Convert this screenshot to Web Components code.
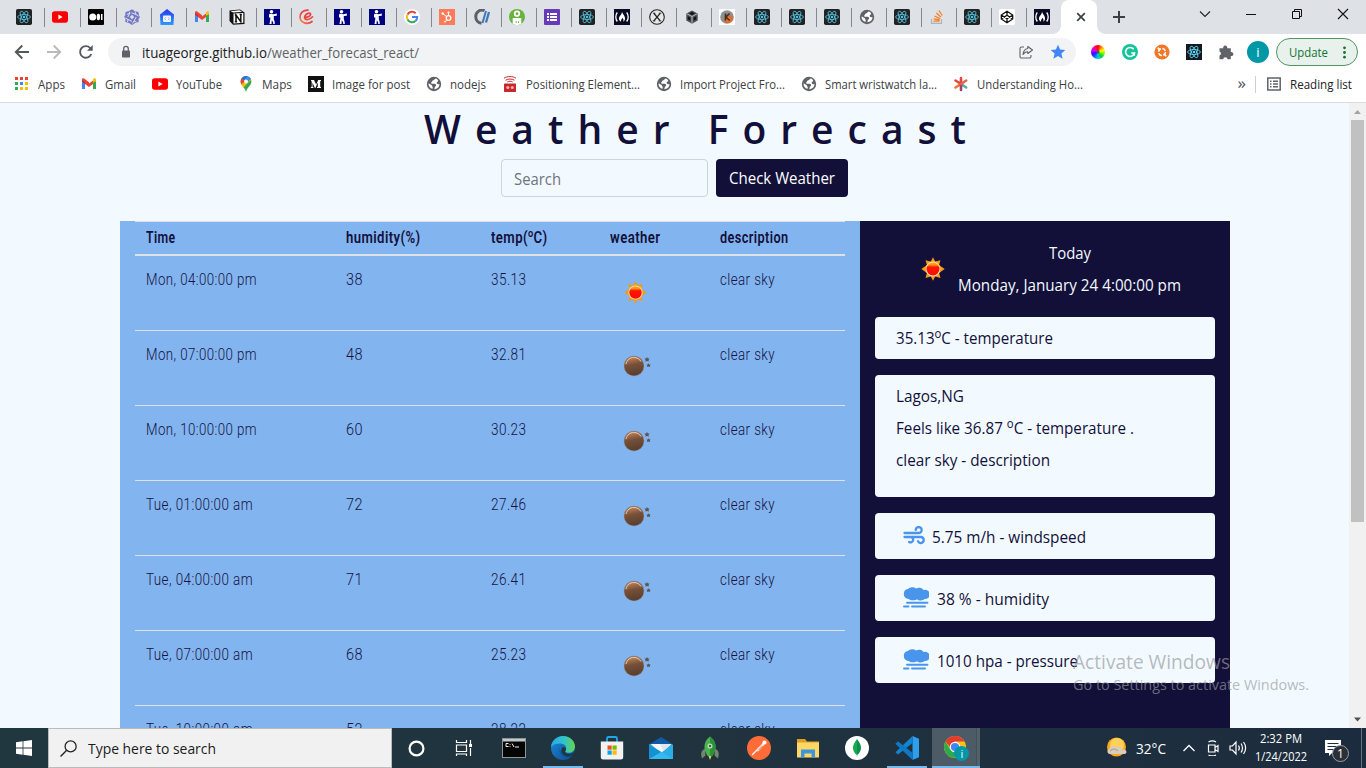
<!DOCTYPE html>
<html lang="en">
<head>
<meta charset="utf-8">
<title>Weather Forecast</title>
<style>
html,body{margin:0;height:100%;overflow:hidden}
body{font-family:"Open Sans","Noto Sans",sans-serif;font-size:12px;color:#3c4043}
</style>
</head>
<body>
<desktop-screen></desktop-screen>
<script>
const stroke = (d, w = 1.5, c = 'currentColor', more = '') => `<path d="${d}" fill="none" stroke="${c}" stroke-width="${w}" ${more}/>`;
const orbits = c => [0, 60, 120].map(a => `<ellipse cx="8" cy="8" rx="6.4" ry="2.5" fill="none" stroke="${c}" stroke-width=".85" transform="rotate(${a} 8 8)"/>`).join('') + `<circle cx="8" cy="8" r="1.3" fill="${c}"/>`;
const gmail = '<path d="M1 13V4l3 2.3V13z" fill="#4285f4"/><path d="M15 13V4l-3 2.3V13z" fill="#34a853"/><path d="M1 5.2V3.6C1 2.3 2.4 2 3.2 2.6L8 6.3v3.8z" fill="#ea4335"/><path d="M4 4.5 8 7.6l4-3.1v3.4L8 11 4 7.9z" fill="#ea4335"/><path d="M12 6.8V3.3l1-.8c.9-.6 2 0 2 1.1v1.6z" fill="#fbbc04"/><path d="M1 4l3 2.4v1.4L1 5.5z" fill="#c5221f"/>';
const youtube = '<rect x="0" y="2.3" width="16" height="11.4" rx="2.6" fill="#f00"/><path d="M6.4 5.5v5L10.6 8z" fill="#fff"/>';
const globe = '<circle cx="8" cy="8" r="7.2" fill="#5f6368"/><path d="M9.8 2.600C8.200 3 8.600 4.200 7 4.600c-1.200.3-.7 1.300-1.500 1.700-1 .6-.2 1.700 1 1.500 1.900-.3 3.400 0 3.600 1.500.1 1-1.200 1.200-1.400 2.200-.1.700-.2 1.200-.6 1.700 3.200 0 5.400-2.300 5.400-5.200-1.600.5-3-.1-2.800-1.300.2-1.200 1.300-1 1.500-2C11.700 3.500 10.700 2.900 9.800 2.600z" fill="#fff"/><path d="M2.500 7.500c1.300.1 1.500 1.100 2.600 1.300 1.200.3.800 1.600 1.500 2.100.4.400.1 1.300-.1 1.900C4 12.300 2.500 10.500 2.500 7.500z" fill="#fff"/>';
const cloud = '<path d="M5.500 12a5 5 0 0 1-.6-9.900 6 6 0 0 1 8.200-.5 5.500 5.500 0 0 1 7.500 1.500A4.600 4.600 0 1 1 21.500 12c-1.400 1.800-5.800 2-7.500.2-1.600 1.500-6.500 1.600-8.500-.2z" fill="#4995eb"/>' + stroke('M4 15.700h20.500M1 19.500h4.500M9 19.500h13', 1.900, '#4995eb', 'stroke-linecap="round"');
const I = {
 react: ['0 0 16 16', '<rect width="16" height="16" rx="1.800" fill="#222"/>' + orbits('#53c1de')],
 reactsq: ['0 0 16 16', '<rect width="16" height="16" fill="#15181d"/>' + orbits('#61dafb')],
 youtube: ['0 0 16 16', youtube],
 medium: ['0 0 16 16', '<rect width="16" height="16" rx="1" fill="#000"/><circle cx="4.700" cy="8" r="3.500" fill="#fff"/><ellipse cx="10.400" cy="8" rx="1.700" ry="3.300" fill="#fff"/><path d="M13 5h1.500v6H13z" fill="#fff"/>'],
 swirl: ['0 0 16 16', '<path d="M8 .3 11 2.200 14.500 3l.5 3.700L16 8l-1.500 2 .2 3L11 14l-3 2-3-2-3.700-1L1.500 9.700.2 8 1.300 6 1.500 3 5 2z" fill="#7478c4"/>' + stroke('M7.500 3.800 12 5.500M12.200 8 10 12M8 12.300 4 10.500M3.800 8 6 4M5 2.800 6 4 3 5.500M11 2.500 12 5.500 14.500 7M12.500 13 10 12 8.500 14.500M3.500 13 4 10.500 1.500 9', 1, '#dee1e6') + '<path d="M8 5.700l2.200 2.300L8 10.300 5.800 8z" fill="#dee1e6"/>'],
 house: ['0 0 16 16', '<defs><linearGradient id="h" x2="0" y2="1"><stop stop-color="#2439e8"/><stop offset="1" stop-color="#2f9bff"/></linearGradient></defs><path d="M8 0 15 5.500 14.500 16h-13L1 5.500z" fill="url(#h)"/><rect x="4" y="6.500" width="8" height="6.500" rx="1" fill="#eef3ff"/>' + stroke('M6.800 8.300 5.600 9.700l1.200 1.400M9.200 8.300l1.200 1.400-1.200 1.400', .8, '#7fa3f5')],
 gmail: ['0 0 16 16', gmail],
 notion: ['0 0 16 16', '<path d="M.5 1.500 11 .5 15.500 3.500V15L4 15.800.5 12z" fill="#111"/><path d="M1.500 2.200 10.700 1.300l2.300 1.500-8.800.6z" fill="#fff"/><path d="M4.500 4.600l9.800-.7v9.900l-9.800.7z" fill="#fff"/>' + stroke('M7 13V6l4.800 6.700V5.500M5.800 6h2M5.800 12.700h2.300M10.600 5.600h2.300', 1.500, '#111')],
 runner: ['0 0 16 16', '<rect width="16" height="16" fill="#010080"/><circle cx="7.500" cy="2.800" r="1.800" fill="#fff"/><path d="M5.500 4.700 9.800 5.300 12.800 4.500v2.300L9.800 7v3.200l.8 2.200.2 2.600H9.300L9 13 7.800 11.300 7.500 15H5.500L6.300 10V8.500H5V6z" fill="#fff"/>'],
 eloop: ['0 0 16 16', '<defs><linearGradient id="e" x1="1" x2="0" y2="1"><stop stop-color="#f0413d"/><stop offset=".6" stop-color="#e64545"/><stop offset="1" stop-color="#f89b3a"/></linearGradient></defs>' + stroke('M5.500 8.300C8.500 8.500 12 7 11.500 5 10.800 3.600 7.500 4 6 7c-1.200 2.500.5 4 3 3.500 2-.3 3.500-1.500 4.500-2.700M9 1.200C4 1 .9 4.300 1 8.300c.3 5.500 7.500 8 12 4.200', 1.700, 'url(#e)', 'stroke-linecap="round"')],
 google: ['0 0 16 16', '<circle cx="8" cy="8" r="8" fill="#fff"/>' + stroke('M3.500 5.400A5.200 5.200 0 0 1 11.700 4.300', 2, '#ea4335') + stroke('M3.500 10.600a5.200 5.200 0 0 1 0-5.200', 2, '#fbbc05') + stroke('M11.500 11.900A5.200 5.200 0 0 1 3.500 10.600', 2, '#34a853') + stroke('M8 8h5.200c0 1.600-.6 3-1.700 3.900', 2, '#4285f4')],
 hubspot: ['0 0 16 16', '<rect width="16" height="16" fill="#ff7a59"/><circle cx="9.500" cy="9" r="2.300" fill="none" stroke="#fff" stroke-width="1.300"/>' + stroke('M9.500 6.500V4M7.500 7.500 3.700 4.500M7.800 11l-1.500 1.500', 1, '#fff') + '<circle cx="9.500" cy="3.500" r="1.100" fill="#fff"/><circle cx="3.700" cy="4.500" r="1.200" fill="#fff"/><circle cx="6" cy="12.600" r=".9" fill="#fff"/>'],
 cslash: ['0 0 16 16', stroke('M10.500 1.600A6.300 6.300 0 0 0 1.800 8 6.300 6.300 0 0 0 7.500 14.200', 3, '#5b616a') + stroke('M12 2 8.500 14', 2, '#4277b8') + stroke('M15 3 12 13.500', 2.300, '#4277b8')],
 person: ['0 0 16 16', '<circle cx="8" cy="8" r="8" fill="#69b23e"/><circle cx="8" cy="4.700" r="2.300" fill="none" stroke="#fff" stroke-width="1.700"/><path d="M3.700 9h8.600v5.700a8 8 0 0 1-8.600 0z" fill="#fff"/><path d="M6.700 12.300h1V14h-1zm2.300 0h1V14H9z" fill="#69b23e"/>'],
 forms: ['0 0 16 16', '<rect width="16" height="16" rx="1" fill="#673ab7"/><path d="M3 4h2v2H3zm3 0h7v2H6zM3 7h2v2H3zm3 0h7v2H6zM3 10h2v2H3zm3 0h7v2H6z" fill="#fff"/>'],
 fcc: ['0 0 16 16', '<rect width="16" height="16" fill="#0a0a23"/>' + stroke('M3.300 3.500c-2 2.500-2 6.500 0 9M12.700 3.500c2 2.500 2 6.500 0 9', 1.300, '#fff') + '<path d="M8 2.500c.3 2.500 3.500 4.500 3 7.500-.2 1.300-1 2.300-2 2.700.8-1.200.7-2.800-.7-3.900-.2 1.500-1.800 1.900-1.200 3.900C4 11 4.700 8 6.300 6.400 7.500 5 8 4 8 2.500z" fill="#fff"/>'],
 xcircle: ['0 0 16 16', '<circle cx="8" cy="8" r="7.300" fill="#e6e7e9" stroke="#222" stroke-width="1.100"/>' + stroke('M5 4.500l6 7.200M11.200 4.300 4.800 11.800', 1.300, '#222') + stroke('M3.800 4.200h2.500M9.800 4.200h2.500M3.800 11.900h2.500M9.800 11.900h2.500', .9, '#222')],
 cube: ['0 0 16 16', '<path d="M8 1.500 13.700 4.500v7L8 14.700 2.300 11.500v-7z" fill="#4b4f54"/>' + stroke('M2.700 4.700 8 7.500l5.300-2.800M8 7.500v7', .9, '#c3c6ca') + '<path d="M8 3 10.700 4.500 8 6 5.300 4.500zM3.800 7.300 6.300 8.800v3L3.800 10.300zM12.200 7.300 9.700 8.800v3l2.500-1.500z" fill="#111"/>'],
 kball: ['0 0 16 16', '<defs><radialGradient id="k" cx=".6" cy=".65"><stop stop-color="#ff8b32"/><stop offset=".45" stop-color="#de692a"/><stop offset=".85" stop-color="#8c9296"/></radialGradient></defs><rect width="16" height="16" fill="#fff"/><circle cx="8" cy="8" r="6.800" fill="url(#k)"/>' + stroke('M6.500 4.500v7M10.500 4.500 7 8l3.700 3.500', 1.600, '#37302c')],
 stack: ['0 0 16 16', stroke('M2.500 10v4.300h10V10', 1.200, '#b0b4b9') + stroke('M4.500 12.200h6M4.700 9.800l6 1.200M5.500 7l5.600 2.600M7.300 4l4.600 4M9.800 1.500l3.500 5', 1.300, '#f48024')],
 codepen: ['0 0 16 16', '<rect width="16" height="16" rx="1.500" fill="#fff"/>' + stroke('M8 2.300 13.700 6v4L8 13.700 2.300 10V6zM2.300 6 8 9.800 13.700 6M2.300 10 8 6.200l5.700 3.800M8 2.300v3.900M8 9.800v3.900', 1.300, '#111')],
 globe: ['0 0 16 16', globe],
 close: ['0 0 16 16', stroke('M4.200 4.200l7.600 7.600M11.800 4.200l-7.600 7.600', 1.700, '#3c4043')],
 plus: ['0 0 16 16', stroke('M8 2v12M2 8h12', 2, '#3c4043')],
 chev: ['0 0 16 16', stroke('M3 5.500l5 5 5-5', 1.100, '#222')],
 min: ['0 0 16 16', stroke('M3 8.500h10', 1, '#111')],
 max: ['0 0 16 16', stroke('M3.500 5.500h7v7h-7zM5.500 5.500v-2h7v7h-2', 1, '#111')],
 winx: ['0 0 16 16', stroke('M3 3l10 10M13 3 3 13', 1.100, '#111')],
 back: ['0 0 16 16', stroke('M15 8H2M8.300 1.500 1.800 8l6.500 6.500', 1.900, '#54585c')],
 fwd: ['0 0 16 16', stroke('M1 8h13M7.700 1.500 14.200 8l-6.500 6.500', 1.900, '#b8bbbe')],
 reload: ['0 0 16 16', stroke('M13.300 10A5.800 5.800 0 1 1 12 3.800l1 1', 1.900, '#54585c') + '<path d="M14.700 1v5.700H9z" fill="#54585c"/>'],
 lock: ['0 0 16 16', '<rect x="4" y="6.500" width="8" height="7" rx=".8" fill="#5f6368"/>' + stroke('M5.700 7V4.700a2.300 2.300 0 0 1 4.600 0V7', 1.300, '#5f6368')],
 share: ['0 0 16 16', stroke('M6 3H3.500A1.500 1.500 0 0 0 2 4.500v8A1.500 1.500 0 0 0 3.500 14h8a1.500 1.500 0 0 0 1.500-1.500V11M9.800 2.500 14.500 6 9.800 9.500V7.700C7.500 7.700 6 8.800 5 10.500 5.300 7.500 7 5 9.800 4.500z', 1.100, '#5f6368', 'stroke-linejoin="round"')],
 star: ['0 0 16 16', '<path d="M8 .8l2.100 4.800 5.200.5-3.900 3.500 1.200 5.100L8 12l-4.600 2.700 1.200-5.100L.7 6.100l5.200-.5z" fill="#4285f4"/>'],
 grammarly: ['0 0 16 16', '<circle cx="8" cy="8" r="8" fill="#15c39a"/>' + stroke('M11.700 5.200A4.500 4.500 0 1 0 12.500 9H9.300M12.300 9.200v2.600', 1.600, '#fff')],
 orange: ['0 0 16 16', '<circle cx="8" cy="8" r="7.600" fill="#f37726"/><circle cx="8" cy="8" r="3.500" fill="none" stroke="#fff" stroke-width="1.500" stroke-dasharray="4 1.500"/>' + stroke('M5.700 5.700 4.300 4.300M10.300 10.300l1.400 1.400', 1.800, '#fff', 'stroke-linecap="round"')],
 puzzle: ['0 0 16 16', '<path d="M1.500 4.300h3.700a2.100 2.100 0 1 1 4 0h3.600v3.900a2 2 0 1 1 0 3.800v3.300H9.500a2.100 2.100 0 0 0-4.200 0H1.500v-3.700a2.100 2.100 0 0 0 0-4z" fill="#5f6368"/>'],
 dots: ['0 0 16 16', '<g fill="#137333"><circle cx="8" cy="3" r="1.500"/><circle cx="8" cy="8" r="1.500"/><circle cx="8" cy="13" r="1.500"/></g>'],
 apps: ['0 0 16 16', [['#ea4335','#ea4335','#ea4335'],['#34a853','#4285f4','#fbbc04'],['#34a853','#fbbc04','#fbbc04']].map((r,y)=>r.map((c,x)=>`<rect x="${1+x*5}" y="${1+y*5}" width="3" height="3" fill="${c}"/>`).join('')).join('')],
 maps: ['0 0 16 16', '<path d="M8 0A5.400 5.400 0 0 0 2.600 5.400c0 4.200 4.500 5.600 5.400 10.600.9-5 5.400-6.400 5.400-10.600A5.400 5.400 0 0 0 8 0z" fill="#34a853"/><path d="M3.200 8 12 1.800 13 4 9.500 7.200 5.500 11.500C4.500 10.200 3.700 9.200 3.200 8z" fill="#fbbc04"/><path d="M3.200 8C2.300 6 2.500 3.600 3.900 2L8 5.500z" fill="#ea4335"/><path d="M3.900 2A5.400 5.400 0 0 1 8 0l1.500.2L6 4.300z" fill="#1a73e8"/><path d="M9.500.2c1.500.4 2.700 1.400 3.400 2.800L9 7 7 4z" fill="#4285f4"/><circle cx="8" cy="5.400" r="2" fill="#fff"/>'],
 msq: ['0 0 16 16', '<rect width="16" height="16" fill="#111"/><path d="M3 4h3l2.200 4.600L10.200 4H13v.7l-.8.6v5.400l.8.600v.7H9v-.7l.8-.6V6.600L7.400 12h-.5L4.500 6.800v3.600l1 1v.6H2.700v-.6l1-1V5.500L3 4.700z" fill="#fff"/>'],
 robot: ['0 0 16 16', '<rect x="2" y="7.500" width="12" height="8.500" rx=".7" fill="#c6282b"/><circle cx="5.800" cy="11.500" r="1.500" fill="#f6b4b4"/><circle cx="10.300" cy="11.500" r="1.500" fill="#f6b4b4"/>' + stroke('M2 2.200C5 0 11 0 14 2.200M3.500 4.200c3-1.600 6-1.600 9 0M5.300 6c2-1 3.500-1 5.400 0', 1, '#c6282b')],
 aster: ['0 0 16 16', stroke('M8 8V2M8 8 2.500 4.500', 2.600, '#e8453c','stroke-linecap="round"') + stroke('M8 8l5.200 3.500', 2.600, '#4bb2a8','stroke-linecap="round"') + stroke('M8 8 2.500 11.500', 2.600, '#f3722c','stroke-linecap="round"') + stroke('M8 8v6', 2.600, '#a33d6d','stroke-linecap="round"') + stroke('M8 8l5.200-3.500', 2.600, '#e36352','stroke-linecap="round"')],
 list: ['0 0 16 16', stroke('M1.800 2h12.400v12H1.800z', 1.500, '#5f6368') + '<path d="M4 4.500h1.500V6H4zm3 0h5V6H7zM4 7.300h1.500v1.500H4zm3 0h5v1.500H7zM4 10h1.500v1.500H4zm3 0h5v1.500H7z" fill="#5f6368"/>'],
 sun: ['0 0 24 24', '<defs><linearGradient id="s" x2="0" y2="1"><stop offset="0" stop-color="#ffb01e"/><stop offset=".2" stop-color="#ff8a0c"/><stop offset=".36" stop-color="#fa1500"/><stop offset="1" stop-color="#ff0a06"/></linearGradient></defs><path d="M12 .3l2.200 4.200 5.300-1.300-1.400 4.800 5.600 4-5.600 4 1.400 4.900-5.300-1.400L12 23.700l-2.200-4.200-5.300 1.400L5.900 16 .3 12l5.600-4-1.400-4.800 5.300 1.300z" fill="#f39a17"/><circle cx="12" cy="12" r="7.400" fill="#ffe0b0"/><circle cx="12" cy="12" r="6.500" fill="url(#s)"/>'],
 moon: ['0 0 28 22', '<defs><linearGradient id="m" x2=".2" y2="1"><stop stop-color="#c69a7a"/><stop offset=".25" stop-color="#a7704a"/><stop offset=".5" stop-color="#765039"/><stop offset="1" stop-color="#5a4030"/></linearGradient></defs><circle cx="11" cy="11" r="10.200" fill="#8a7568"/><circle cx="11" cy="11" r="9.600" fill="url(#m)"/>' + stroke('M3 9C4 5 7 2.500 10.700 2.500s6 1.800 7.300 4', 1, '#e3cdbd') + '<path d="M24 2l.9 1.500 1.700.1-1.100 1.300.3 1.700-1.800-.7-1.700.7.3-1.700-1.100-1.300 1.700-.1zM25.500 8.300l.8 1.100 1.500.1-.9 1.100.2 1.400-1.600-.6-1.500.6.2-1.400-.9-1.100 1.600-.1z" fill="#5b5450"/>'],
 wind: ['0 0 22 20', stroke('M1.500 7h14.200a3 3 0 1 0-3-3M1.500 11h16.300a3 3 0 1 1-2.800 4.300M1.500 11h5.800a2.700 2.700 0 1 1-1.200 5', 2.300, '#4995eb', 'stroke-linecap="round" stroke-linejoin="round"')],
 fog: ['0 0 26 21', cloud],
 up: ['0 0 17 17', '<path d="M5 11l3.500-4 3.500 4z" fill="#a3a3a3"/>'],
 down: ['0 0 17 17', '<path d="M5 6.500 8.500 10.500 12 6.500z" fill="#505050"/>'],
 win: ['0 0 16 16', '<path d="M0 2.300 6.600 1.300v6.300H0zM7.400 1.200 16 0v7.600H7.400zM0 8.400h6.600v6.300L0 13.700zM7.400 8.400H16V16l-8.600-1.200z" fill="#fff"/>'],
 mag: ['0 0 16 16', '<circle cx="10" cy="6" r="5.200" fill="none" stroke="#222" stroke-width="1.200"/>' + stroke('M6.300 9.700.5 15.500', 1.300, '#222')],
 cortana: ['0 0 16 16', '<circle cx="8" cy="8" r="6.500" fill="none" stroke="#fff" stroke-width="2.100"/>'],
 task: ['0 0 18 18', stroke('M1.500 1v2.500h10V1M1.500 6h10v6.500h-10zM1.500 17v-2h10v2M15.500 1v4M15.500 9v8', 1.200, '#fff') + '<rect x="14" y="5" width="3" height="3" fill="#fff"/>'],
 cmd: ['0 0 24 24', '<rect x=".5" y="2.500" width="23" height="19" fill="#050505" stroke="#8e9699"/><rect x="1" y="3" width="22" height="2.500" fill="#c2c7c9"/>' + stroke('M6.500 7.500H4v3h2.500M8 8v.8M8 10v.8M10 7.500l2 3.500M13 11h4', 1, '#eee')],
 edge: ['0 0 24 24', '<defs><linearGradient id="g1" x2="1"><stop stop-color="#2ba7e8"/><stop offset=".55" stop-color="#31c4cb"/><stop offset="1" stop-color="#63d64b"/></linearGradient><linearGradient id="g2" x2="1" y2="1"><stop stop-color="#1b8bd4"/><stop offset="1" stop-color="#0d4a98"/></linearGradient></defs><circle cx="12" cy="12" r="12" fill="url(#g2)"/><path d="M0 11C.5 5 5.500 0 12 0c7.500 0 12 5.500 12 10.500 0 4-3 6.300-6 6.300-2.700 0-4-.8-3.800-1.800.2-.8 1-1 1-2.800 0-2.500-2.500-4.700-6.500-4.700C5.500 7.500 2 8.500 0 11z" fill="url(#g1)"/><path d="M9 11c-1.500 4 1 9.500 7 9.500 2.500 0 4.500-.8 6.500-1.800l-1 2.300-3.500-1.500-3.500.3c-4-.3-6.500-4-5.500-8.800z" fill="#0a3a7c"/><path d="M14 15.500c0 1.700 2 2.500 4.300 2.500 2 0 4-.8 5.200-2.200L24 20l-2.200-.9c-3 1.700-7.800 1.600-10.300-1-1.800-2-1.600-5.300 0-6.600 2-.7 4 .5 3.500 2.500z" fill="#1f3540"/>'],
 store: ['0 0 24 24', stroke('M7 6V2.500A1.500 1.500 0 0 1 8.500 1h7A1.500 1.500 0 0 1 17 2.500V6', 1.800, '#1fa7e8') + '<path d="M.8 5.500h22.400V21a2.500 2.500 0 0 1-2.500 2.500H3.300A2.500 2.500 0 0 1 .8 21z" fill="#f2f2f2"/><path d="M7.500 9.500h4.200v4.200H7.500z" fill="#f25022"/><path d="M12.500 9.500h4.200v4.200h-4.200z" fill="#7fba00"/><path d="M7.500 14.500h4.200v4.200H7.500z" fill="#00a4ef"/><path d="M12.500 14.500h4.200v4.200h-4.200z" fill="#ffb900"/>'],
 mail: ['0 0 24 24', '<path d="M0 8.500 12 1l12 7.500z" fill="#0f5ba8"/><path d="M0 8.500V23h24V8.500z" fill="#2aaee8"/><path d="M1.500 8h21L12 17z" fill="#f7f7f7"/><path d="M11 8h11.500L14.500 15z" fill="#dfe5ea"/><path d="M0 8.500 24 23H0z" fill="#36b8f0"/><path d="M0 8.500 12 16l-1.500 1L0 23z" fill="#1590d4"/>'],
 rocket: ['0 0 24 24', '<path d="M7 13c-4 1-4.500 5-3 9.500l3.500-3M17 13c4 1 4.500 5 3 9.500l-3.500-3" fill="#73866d"/><path d="M12 .5c5 3.500 6.500 9 5 14.500L14.500 20h-5L7 15C5.500 9.500 7 4 12 .5z" fill="#4bb24f"/><path d="M12 .5c5 3.500 6.500 9 5 14.500L14.500 20H12z" fill="#2e913a"/><circle cx="12" cy="10" r="2.500" fill="#bfe3c0"/><circle cx="12" cy="10" r="1.300" fill="#356c3b"/><path d="M10.500 20h3L12 24z" fill="#e2cf57"/>'],
 postman: ['0 0 24 24', '<circle cx="12" cy="12" r="12" fill="#ff6c37"/>' + stroke('M5 19 13 11', 1.300, '#fff') + stroke('M11 14 16 8.500', 2.600, '#ffe2d7', 'stroke-linecap="round"') + '<circle cx="17.500" cy="6.500" r="2.100" fill="#fff"/>' + stroke('M11.500 14l4-4', .8, '#d4562e')],
 files: ['0 0 24 24', '<path d="M1 3h8l2 2.500h12V9H1z" fill="#e0a01c"/><path d="M1 6.500h22v15H1z" fill="#ffd764"/><path d="M5 13.500h14v8h-3.500v-4h-7v4H5z" fill="#3c95dd"/>'],
 mongo: ['0 0 24 24', '<circle cx="12" cy="12" r="12" fill="#fff"/><path d="M12 3c3 4 4 6 4 9s-1.500 5-3.600 6.800L12 21z" fill="#118d4d"/><path d="M12 3C9 7 8 9 8 12s1.500 5 3.600 6.800L12 21z" fill="#13aa52"/>'],
 code: ['0 0 24 24', '<path d="M17.500 0 24 2.800v18.400L17.500 24z" fill="#2f9fec"/><path d="M17.500 0v7L3 18.500.5 16.300z" fill="#1384d1"/><path d="M17.500 24v-7L3 5.500.5 7.700z" fill="#0a6db6"/><path d="M3 5.500.5 7.700l17 15.800V17z" fill="#1078c2"/>'],
 chrome: ['0 0 24 24', '<circle cx="11" cy="11" r="11" fill="#fbc116"/><path d="M1.500 5.500a11 11 0 0 1 19 0H11L7.500 13z" fill="#e33b2e"/><path d="M1.500 5.500a11 11 0 0 0 9 16.500l5-8.500-9 .5z" fill="#2da94f"/><circle cx="11" cy="11" r="5.200" fill="#fff"/><circle cx="11" cy="11" r="4.100" fill="#4285f4"/>'],
 tsun: ['0 0 22 22', '<circle cx="10.500" cy="10" r="9.500" fill="#fba81c"/><circle cx="11" cy="8" r="7" fill="#ffd05a"/><path d="M3 17a3 3 0 0 1 .5-5.500 4.500 4.500 0 0 1 7-1.500 4.500 4.500 0 0 1 5.500 3 3 3 0 0 1 4.500 2c0 1-1 2-2 2z" fill="#d8cdbc"/>' + stroke('M4 14c3-3 6-2 8 0', 1, '#a9927a')],
 caret: ['0 0 16 16', stroke('M2.500 11 8 5.500l5.500 5.500', 1.300, '#fff')],
 cam: ['0 0 16 16', stroke('M3.500 5h6.500v7H3.500zM10 7.500l3-2v6l-3-2M3.500 2C6 .5 8.500.5 11 2M3.500 15c2.500 1.300 5 1.300 7.500 0', 1.200, '#fff')],
 vol: ['0 0 18 16', stroke('M1 6h2.500l3.500-4v12l-3.500-4H1zM9.500 5.500c1 1.500 1 3.500 0 5M12 3.500c2 2.500 2 6.500 0 9M14.500 2c2.800 3.500 2.800 8.500 0 12', 1.200, '#fff')],
 note: ['0 0 16 16', '<path d="M0 0h16v13H7l-3 3v-3H0z" fill="#fff"/>' + stroke('M2.500 3.500h11M2.500 6.500h11M2.500 9.500h7', 1.200, '#1d2d3c')],
};

const make = (name, html, setup) => customElements.define(name, class extends HTMLElement {
  connectedCallback() {
    if (this.shadowRoot) return;
    const root = this.attachShadow({mode: 'open'});
    root.innerHTML = typeof html === 'function' ? html(this) : html;
    if (setup) setup(this, root);
  }
});

make('desktop-screen', `<style>:host{display:flex;flex-direction:column;width:1366px;height:768px;overflow:hidden;position:relative}</style>
<tab-strip></tab-strip><tool-bar></tool-bar><bookmark-bar></bookmark-bar><page-view></page-view><task-bar></task-bar><activation-note></activation-note>`);

make('tab-strip', () => {
  const names = 'react youtube medium swirl house gmail notion runner eloop runner runner google hubspot cslash person forms react fcc xcircle cube kball react react react globe react stack react codepen fcc'.split(' ');
  return `<style>:host{display:flex;height:34px;flex:none;background:#dee1e6;padding-left:9px;box-sizing:border-box}
  .t{width:35px;box-sizing:border-box;padding:9px 0 0 7px;background:linear-gradient(#85888c,#85888c) right 8px/1px 19px no-repeat;background-position:right 0 top 8px}
  .t.w{width:36px}.t.l{background:none;width:34px}
  .a{width:36px;background:#fff;border-radius:8px 8px 0 0;display:flex;justify-content:center;align-items:center;padding-left:3px;box-sizing:border-box;position:relative}
  .a::before,.a::after{content:"";position:absolute;bottom:0;width:8px;height:8px}
  .a::before{left:-8px;background:radial-gradient(circle at 0 0,transparent 7.500px,#fff 8px)}
  .a::after{right:-8px;background:radial-gradient(circle at 100% 0,transparent 7.500px,#fff 8px)}
  .p{margin:9px 0 0 14px}.sp{flex:1}
  .c{display:flex;gap:30px;padding:6px 15px 0 0}
  </style>${names.map((n,i)=>`<div class="t ${i<3?'w':''} ${i==29?'l':''}"><ui-icon name="${n}"></ui-icon></div>`).join('')}
  <div class="a"><ui-icon name="close" s="16"></ui-icon></div><ui-icon class="p" name="plus" s="16"></ui-icon><div class="sp"></div>
  <div class="c"><ui-icon name="chev"></ui-icon><ui-icon name="min"></ui-icon><ui-icon name="max"></ui-icon><ui-icon name="winx"></ui-icon></div>`;
});

make('tool-bar', `<style>:host{display:flex;height:36px;flex:none;background:#fff;align-items:center;padding:0 8px 0 14px;box-sizing:border-box}
.n{display:flex;gap:16px;width:94px}
.o{width:968px;height:28px;border-radius:14px;background:#f1f3f4;display:flex;align-items:center;padding:0 10px;box-sizing:border-box;font-size:14px;color:#5f6368}
.o b{font-weight:400;color:#202124}.lk{margin-right:8px}.sp{flex:1}.sh{margin-right:16px}
.e{display:flex;gap:16px;margin-left:14px}
.w{width:14px;height:14px;margin:1px;border-radius:50%;background:radial-gradient(circle,#555 1px,transparent 2px),conic-gradient(#f00,#f80,#ff0,#6f0,#0c4,#0cf,#06f,#40f,#c0f,#f08,#f00)}
.v{width:22px;height:22px;border-radius:50%;background:#0097a7;color:#fff;display:flex;align-items:center;justify-content:center;font-size:13px;margin:0 7px 0 13px}
.u{width:82px;height:28px;border:1px solid #4d9562;border-radius:14px;box-sizing:border-box;background:#e9f1ec;color:#137333;font-size:12.500px;display:flex;align-items:center;padding-left:12px;gap:9px}
</style><div class="n"><ui-icon name="back"></ui-icon><ui-icon name="fwd"></ui-icon><ui-icon name="reload"></ui-icon></div>
<div class="o"><ui-icon class="lk" name="lock"></ui-icon><b><ui-text w="125">ituageorge.github.io</ui-text></b><ui-text w="152">/weather_forecast_react/</ui-text><span class="sp"></span><ui-icon class="sh" name="share"></ui-icon><ui-icon name="star"></ui-icon></div>
<div class="e"><div class="w"></div><ui-icon name="grammarly"></ui-icon><ui-icon name="orange"></ui-icon><ui-icon name="reactsq"></ui-icon><ui-icon name="puzzle"></ui-icon></div>
<div class="v">i</div><div class="u"><ui-text w="39">Update</ui-text><ui-icon name="dots" s="15"></ui-icon></div>`);

make('bookmark-bar', () => `<style>:host{display:flex;height:33px;flex:none;background:#fff;border-bottom:1px solid #d9dde1;box-sizing:border-box;align-items:center;padding:0 14px 4px;gap:16px;color:#3c4043;font-size:12px}
.b{display:flex;gap:8px;align-items:center}.sp{flex:1}.q{font-size:17px;line-height:16px;margin-top:-3px;color:#4b4f53}.d{width:1px;height:17px;background:#ced1d4;margin:0 -6px 0 -7px}.r{color:#202124}</style>
${[['apps','Apps',27],['gmail','Gmail',31],['youtube','YouTube',46],['maps','Maps',30],['msq','Image for post',78],['globe','nodejs',36],['robot','Positioning Element...',114],['globe','Import Project Fro...',105],['globe','Smart wristwatch la...',112],['aster','Understanding Ho...',106]].map(([i,t,w])=>`<div class="b"><ui-icon name="${i}"></ui-icon><ui-text w="${w}">${t}</ui-text></div>`).join('')}
<span class="sp"></span><span class="q">»</span><span class="d"></span><div class="b r"><ui-icon name="list"></ui-icon><ui-text w="62">Reading list</ui-text></div>`);

make('page-view', `<style>:host{display:flex;height:625px;flex:none;background:#f3faff;overflow:hidden;color:#12103a}
main{width:1349px;height:625px;overflow:hidden;display:flex;flex-direction:column}
h1{margin:0 0 0 424px;font-size:39px;line-height:52px;height:56px;box-sizing:border-box;font-weight:600;letter-spacing:14px}
form{display:flex;gap:8px;margin-left:501px;height:38px;margin-bottom:24px;font-size:16px}
.i{width:207px;box-sizing:border-box;border:1px solid #ccd3e2;border-radius:4px;padding:2px 0 0 12px;display:flex;align-items:center;color:#6c757d}
.k{width:132px;background:#120f39;color:#fff;border-radius:4px;display:flex;align-items:center;justify-content:center}
.g{display:grid;grid-template-columns:740px 370px;margin-left:120px;height:507px}
</style><main><h1><ui-text w="556">Weather Forecast</ui-text></h1><form><div class="i"><ui-text w="47">Search</ui-text></div><div class="k"><ui-text w="106">Check Weather</ui-text></div></form>
<div class="g"><forecast-table></forecast-table><today-panel></today-panel></div></main><scroll-bar></scroll-bar>`);

make('forecast-table', () => `<style>:host{display:block;background:#82b4f0;padding:0 15px;box-sizing:border-box;overflow:hidden;height:507px;font-family:Roboto,sans-serif;font-size:16px;color:#15133f;letter-spacing:.5px}
.r{display:grid;grid-template-columns:200px 145px 118.500px 110.500px 1fr;height:75px;box-sizing:border-box;border-bottom:1px solid #dee2e6;padding:12px 0 0 11px;line-height:24px;font-weight:300}
.h{height:35px;border-top:1px solid #dee2e6;border-bottom:2px solid #dee2e6;padding-top:4px;font-weight:600;color:#12103a}
sup{font-size:.7em;line-height:0}.m{padding:12px 0 0 13.500px;line-height:0}.s{padding:13px 0 0 14px;line-height:0}
</style><div class="r h"><ui-text w="29.500">Time</ui-text><ui-text w="74.500">humidity(%)</ui-text><ui-text w="56.500">temp(<sup>o</sup>C)</ui-text><ui-text w="50.500">weather</ui-text><ui-text w="68.500">description</ui-text></div>
${[['Mon, 04:00:00 pm',38,'35.13'],['Mon, 07:00:00 pm',48,'32.81'],['Mon, 10:00:00 pm',60,'30.23'],['Tue, 01:00:00 am',72,'27.46'],['Tue, 04:00:00 am',71,'26.41'],['Tue, 07:00:00 am',68,'25.23'],['Tue, 10:00:00 am',52,'28.22']].map(([t,h,d],i)=>`<div class="r"><ui-text w="${i<3?111:107}">${t}</ui-text><ui-text w="17">${h}</ui-text><ui-text w="35.500">${d}</ui-text>${i?'<div class="m"><ui-icon name="moon" w="28" s="22"></ui-icon></div>':'<div class="s"><ui-icon name="sun" s="23"></ui-icon></div>'}<ui-text w="55">clear sky</ui-text></div>`).join('')}`);

make('today-panel', `<style>:host{display:flex;flex-direction:column;gap:16px;background:#120f39;padding:16px 15px 0;box-sizing:border-box;font-size:16px;line-height:32px}
.t{display:flex;color:#f3faff;height:64px;padding-left:46px}.t ui-icon{margin:20px 13px 0 0}.c{display:flex;flex-direction:column;align-items:center}
sup{font-size:.75em;line-height:0}
</style><div class="t"><ui-icon name="sun" s="24"></ui-icon><div class="c"><ui-text w="42">Today</ui-text><ui-text w="223">Monday, January 24 4:00:00 pm</ui-text></div></div>
<info-card h="42"><ui-text w="157">35.13<sup>o</sup>C - temperature</ui-text></info-card>
<info-card h="122"><ui-text w="68">Lagos,NG</ui-text><ui-text w="238">Feels like 36.87 <sup>o</sup>C - temperature .</ui-text><ui-text w="154">clear sky - description</ui-text></info-card>
<info-card h="46" icon="wind" iw="22" ih="20"><ui-text w="154">5.75 m/h - windspeed</ui-text></info-card>
<info-card h="46" icon="fog" iw="26" ih="21"><ui-text w="112">38 % - humidity</ui-text></info-card>
<info-card h="46" icon="fog" iw="26" ih="21"><ui-text w="141">1010 hpa - pressure</ui-text></info-card>`);

make('info-card', e => { const i = e.getAttribute('icon'), wind = i == 'wind'; return `<style>:host{display:flex;flex-direction:column;height:${e.getAttribute('h')}px;box-sizing:border-box;background:#f3faff;color:#12103a;border-radius:4px;padding:5px 0 0 21px;flex:none}
.r{display:flex;gap:${wind?7:8}px;padding:3px 0 0 7px}ui-icon{margin-top:${wind?5:4}px}</style>` + (i ? `<div class="r"><ui-icon name="${i}" w="${e.getAttribute('iw')}" s="${e.getAttribute('ih')}"></ui-icon><slot></slot></div>` : '<slot></slot>'); });

make('scroll-bar', `<style>:host{display:flex;flex-direction:column;width:17px;background:#f1f1f1;height:625px}.t{height:402px;margin:0 2px;background:#c1c1c1}.s{flex:1}</style><ui-icon name="up" s="17"></ui-icon><div class="t"></div><div class="s"></div><ui-icon name="down" s="17"></ui-icon>`);

make('task-bar', () => `<style>:host{display:flex;height:40px;flex:none;background:linear-gradient(90deg,#20373f,#20333f 50%,#1c2c3e);color:#fff;align-items:center}
.s{width:48px;display:flex;justify-content:center}
.q{width:344px;height:40px;box-sizing:border-box;background:#f1f1f1;border:1px solid #b9bcbd;display:flex;align-items:center;gap:11px;padding-left:11px;font-size:15px;color:#1c1c1c}
.x{width:48px;height:40px;display:flex;align-items:center;justify-content:center;box-sizing:border-box;margin-right:1.150px;position:relative}
.f{width:48px;margin-right:0}.z{margin-right:1.500px}.u::after{content:"";position:absolute;left:4px;right:4px;bottom:0;height:2.500px;background:#76b9ed}
.h{background:linear-gradient(90deg,#4c5b65 44px,#2f3f4a 44px,#53616b 45px);width:48px}.h::after{left:0;right:0}
.h i{position:absolute;left:22.500px;top:18px;width:15px;height:15px;border-radius:50%;background:#0097a7;font:normal 11px/15px "Open Sans",sans-serif;text-align:center}
.sp{flex:1}.w{display:flex;gap:8px;align-items:center;font-size:14px;margin-right:15px}.w ui-text{margin-top:1px}
.y{display:flex;gap:8px;margin-right:7px}.c{display:flex;flex-direction:column;align-items:center;font-size:12px;line-height:18px;width:54px;margin-right:17px}
.n{position:relative;width:36px;height:16px}.n b{position:absolute;left:7px;top:5px;width:17px;height:17px;border:1px solid #98a1a8;border-radius:50%;background:#2c3036;font:12px/15px "Open Sans",sans-serif;text-align:center;box-sizing:border-box}
.e{width:1px;height:40px;background:#65717b;margin-right:4px}
</style><div class="s"><ui-icon name="win" s="16"></ui-icon></div><div class="q"><ui-icon name="mag" s="17"></ui-icon><ui-text w="128">Type here to search</ui-text></div>
<div class="x f"><ui-icon name="cortana" s="17"></ui-icon></div><div class="x z"><ui-icon name="task" s="18"></ui-icon></div>
${'cmd edge store mail rocket postman files mongo code'.split(' ').map(n=>`<div class="x ${n=='edge'||n=='code'?'u':''}"><ui-icon name="${n}" s="24"></ui-icon></div>`).join('')}
<div class="x u h"><ui-icon name="chrome" s="24"></ui-icon><i>i</i></div><span class="sp"></span>
<div class="w"><ui-icon name="tsun" s="22"></ui-icon><ui-text w="30">32°C</ui-text></div>
<div class="y"><ui-icon name="caret"></ui-icon><ui-icon name="cam"></ui-icon><ui-icon name="vol" w="18"></ui-icon></div>
<div class="c"><ui-text w="42">2:32 PM</ui-text><ui-text w="52">1/24/2022</ui-text></div><div class="n"><ui-icon name="note"></ui-icon><b>1</b></div><div class="e"></div>`);

make('activation-note', `<style>:host{position:absolute;left:1073px;top:648px;display:flex;flex-direction:column;color:rgba(150,153,158,.68)}.a{font-size:20px;line-height:28px}.b{font-size:14.500px;line-height:18px}</style><div class="a"><ui-text w="157">Activate Windows</ui-text></div><div class="b"><ui-text w="236">Go to Settings to activate Windows.</ui-text></div>`);

make('ui-icon', e => { const [v, m] = I[e.getAttribute('name')], s = e.getAttribute('s') || 16, w = e.getAttribute('w') || s; return `<style>:host{display:block;flex:none;width:${w}px;height:${s}px}svg{display:block;width:100%;height:100%}</style><svg viewBox="${v}">${m}</svg>`; });

/* Text that is condensed or widened to fill exactly the given width. */
make('ui-text', e => `<style>:host{display:inline-block;flex:none;white-space:nowrap;width:${e.getAttribute('w')}px}span{display:inline-block;transform-origin:0 50%}</style><span><slot></slot></span>`, (e, root) => {
  const s = root.querySelector('span'), n = s.getBoundingClientRect().width;
  if (n) s.style.transform = `scaleX(${e.getAttribute('w') / n})`;
});
</script>
</body>
</html>
